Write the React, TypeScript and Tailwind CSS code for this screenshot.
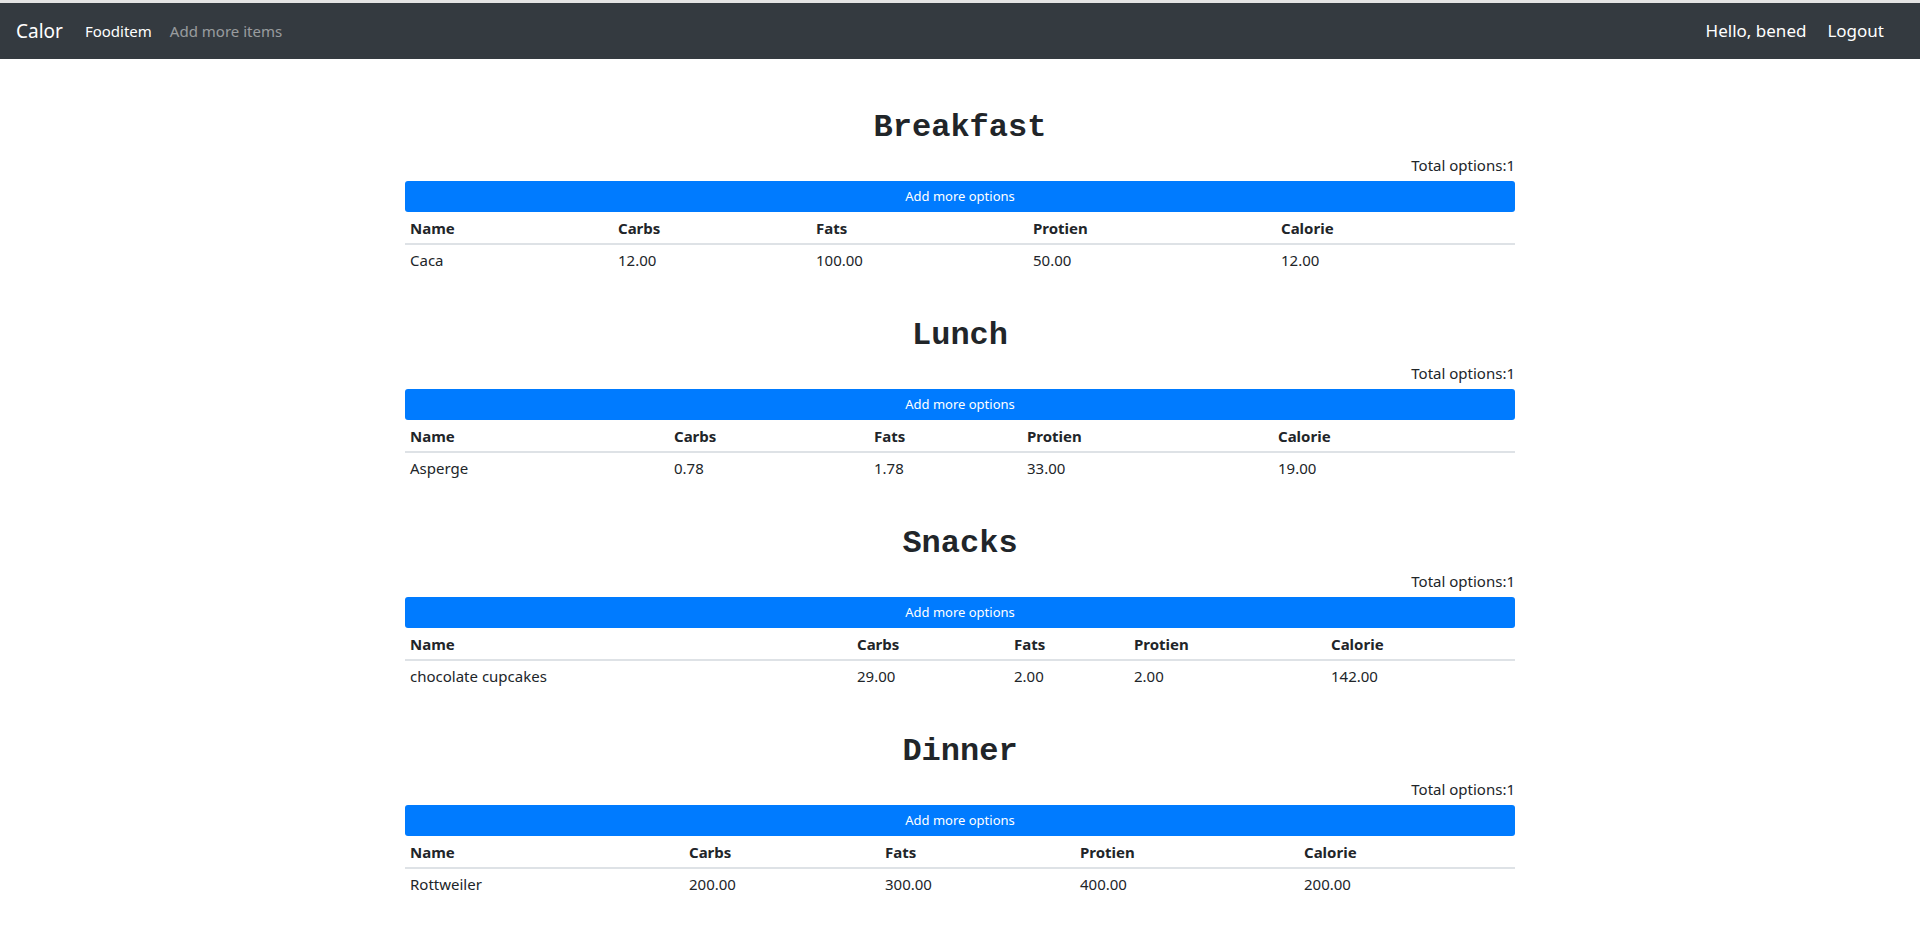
import React from "react";

type Meal = {
  title: string;
  cols: string[];
  row: string[];
};

const meals: Meal[] = [
  {
    title: "Breakfast",
    cols: ["w-[208px]", "w-[198px]", "w-[217px]", "w-[248px]", "w-[239px]"],
    row: ["Caca", "12.00", "100.00", "50.00", "12.00"],
  },
  {
    title: "Lunch",
    cols: ["w-[264px]", "w-[200px]", "w-[153px]", "w-[251px]", "w-[242px]"],
    row: ["Asperge", "0.78", "1.78", "33.00", "19.00"],
  },
  {
    title: "Snacks",
    cols: ["w-[447px]", "w-[157px]", "w-[120px]", "w-[197px]", "w-[189px]"],
    row: ["chocolate cupcakes", "29.00", "2.00", "2.00", "142.00"],
  },
  {
    title: "Dinner",
    cols: ["w-[279px]", "w-[196px]", "w-[195px]", "w-[224px]", "w-[216px]"],
    row: ["Rottweiler", "200.00", "300.00", "400.00", "200.00"],
  },
];

const headers = ["Name", "Carbs", "Fats", "Protien", "Calorie"];

function Section({ meal }: { meal: Meal }) {
  return (
    <section className="mb-[36px]">
      <h2 className="text-center text-[32px] leading-[38px] h-[38px] pt-[3px] font-bold text-[#212529] font-['Liberation_Mono','Courier_New',monospace]">
        {meal.title}
      </h2>
      <div className="mt-[9px] h-[24px] leading-[24px] text-right text-[15px] text-[#212529]">
        Total options:1
      </div>
      <button className="mt-[4px] block w-full h-[31px] rounded-[3px] bg-[#007bff] text-white text-[13px] leading-[21px]">
        Add more options
      </button>
      <table className="w-full table-fixed border-collapse text-[15px] text-[#212529]">
        <thead>
          <tr>
            {headers.map((h, i) => (
              <th
                key={h}
                className={`${meal.cols[i]} text-left font-bold pl-[5px] pt-[4px] pb-[3px] leading-[24px] border-b-2 border-[#dee2e6]`}
              >
                {h}
              </th>
            ))}
          </tr>
        </thead>
        <tbody>
          <tr>
            {meal.row.map((c, i) => (
              <td key={i} className="pl-[5px] pt-[3px] pb-[6px] leading-[24px]">
                {c}
              </td>
            ))}
          </tr>
        </tbody>
      </table>
    </section>
  );
}

export default function App() {
  return (
    <div className="min-h-[940px] bg-white font-['Noto_Sans','Open_Sans',sans-serif]">
      <div className="h-[3px] bg-[#e4e4e4]" />
      <nav className="h-[56px] bg-[#343a40] flex items-center px-4">
        <span className="text-white text-[19px] mr-[22px]">Calor</span>
        <span className="text-white text-[15px] mr-[18px]">Fooditem</span>
        <span className="text-[rgba(255,255,255,0.5)] text-[15px]">Add more items</span>
        <div className="ml-auto flex items-center mr-[20px]">
          <span className="text-white text-[17px] mr-[21px]">Hello, bened</span>
          <span className="text-white text-[17px]">Logout</span>
        </div>
      </nav>
      <main className="w-[1110px] mx-auto pt-[47px]">
        {meals.map((m) => (
          <Section key={m.title} meal={m} />
        ))}
      </main>
    </div>
  );
}
